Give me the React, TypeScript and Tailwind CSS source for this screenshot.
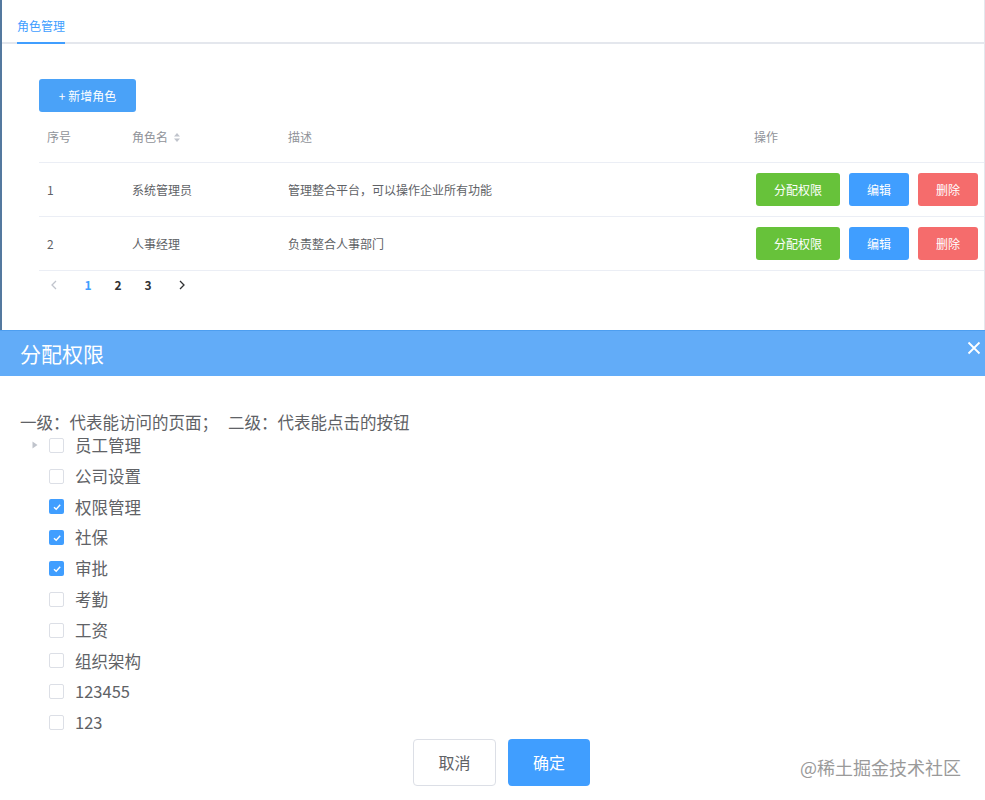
import React from "react";

const font = { fontFamily: '"Noto Sans CJK SC", "Noto Sans", sans-serif' };

function Check({ checked }: { checked: boolean }) {
  if (checked) {
    return (
      <span className="flex h-[15px] w-[15px] items-center justify-center rounded-[2px] bg-[#409eff]">
        <svg width="10" height="10" viewBox="0 0 10 10">
          <path d="M2 5.2 L4.2 7.3 L8.2 2.8" fill="none" stroke="#fff" strokeWidth="1.4" />
        </svg>
      </span>
    );
  }
  return <span className="h-[15px] w-[15px] rounded-[2px] border border-[#dcdfe6] bg-white" />;
}

const tree: { label: string; checked: boolean; caret?: boolean }[] = [
  { label: "员工管理", checked: false, caret: true },
  { label: "公司设置", checked: false },
  { label: "权限管理", checked: true },
  { label: "社保", checked: true },
  { label: "审批", checked: true },
  { label: "考勤", checked: false },
  { label: "工资", checked: false },
  { label: "组织架构", checked: false },
  { label: "123455", checked: false },
  { label: "123", checked: false },
];

const rows = [
  { id: "1", name: "系统管理员", desc: "管理整合平台，可以操作企业所有功能" },
  { id: "2", name: "人事经理", desc: "负责整合人事部门" },
];

export default function App() {
  return (
    <div className="relative h-[800px] w-[985px] overflow-hidden bg-white" style={font}>
      {/* upper page */}
      <div className="h-[330px] border-l-2 border-r border-l-[#54799f] border-r-[#e4e7ed] bg-white">
        <div className="flex h-[44px] items-end border-b-2 border-[#e4e7ed] pl-[15px]">
          <div className="relative -mb-[2px] flex h-[44px] w-[48px] items-center justify-center border-b-2 border-[#409eff] pt-[10px] text-[12px] text-[#409eff]">
            角色管理
          </div>
        </div>
        <div className="pl-[37px] pt-[35px]">
          <button className="flex h-[33px] w-[97px] items-center justify-center rounded-[3px] bg-[#4aa2f8] text-[12px] text-white">
            + 新增角色
          </button>
          <div className="text-[12px] text-[#606266]">
            <div className="grid h-[51px] grid-cols-[85px_156px_466px_1fr] items-center border-b border-[#ebeef5] text-[#909399]">
              <div className="pl-2">序号</div>
              <div className="flex items-center pl-2">
                角色名
                <svg className="ml-[5px]" width="8" height="11" viewBox="0 0 8 11">
                  <path d="M1 4.5 L4 1 L7 4.5 Z" fill="#c0c4cc" />
                  <path d="M1 6.5 L4 10 L7 6.5 Z" fill="#c0c4cc" />
                </svg>
              </div>
              <div className="pl-2">描述</div>
              <div className="pl-2">操作</div>
            </div>
            {rows.map((r) => (
              <div
                key={r.id}
                className="grid h-[54px] grid-cols-[85px_156px_466px_1fr] items-center border-b border-[#ebeef5]"
              >
                <div className="pl-2">{r.id}</div>
                <div className="pl-2">{r.name}</div>
                <div className="pl-2">{r.desc}</div>
                <div className="flex gap-[9px] pl-[10px]">
                  <button className="h-[33px] w-[84px] rounded-[3px] bg-[#67c23a] text-[12px] text-white">分配权限</button>
                  <button className="h-[33px] w-[60px] rounded-[3px] bg-[#409eff] text-[12px] text-white">编辑</button>
                  <button className="h-[33px] w-[60px] rounded-[3px] bg-[#f56c6c] text-[12px] text-white">删除</button>
                </div>
              </div>
            ))}
            <div className="flex h-[28px] items-center text-[12px] font-bold text-[#303133]">
              <span className="flex w-[30px] justify-center">
                <svg width="8" height="10" viewBox="0 0 8 10">
                  <path d="M6 1 L2 5 L6 9" fill="none" stroke="#c0c4cc" strokeWidth="1.3" />
                </svg>
              </span>
              <span className="ml-[4px] flex w-[30px] justify-center text-[#409eff]">1</span>
              <span className="flex w-[30px] justify-center">2</span>
              <span className="flex w-[30px] justify-center">3</span>
              <span className="ml-[4px] flex w-[30px] justify-center">
                <svg width="8" height="10" viewBox="0 0 8 10">
                  <path d="M2 1 L6 5 L2 9" fill="none" stroke="#303133" strokeWidth="1.3" />
                </svg>
              </span>
            </div>
          </div>
        </div>
      </div>

      {/* dialog header */}
      <div className="flex h-[46px] items-center justify-between border-t border-[#4d9ef0] bg-[#62acf8] pl-[20px] pr-[3px]">
        <span className="text-[21px] text-white">分配权限</span>
        <svg className="-mt-[12px]" width="16" height="16" viewBox="0 0 16 16">
          <path d="M2.5 2.5 L13.5 13.5 M13.5 2.5 L2.5 13.5" stroke="#fff" strokeWidth="1.8" />
        </svg>
      </div>

      {/* dialog body */}
      <div className="pl-[20px] pt-[35px] text-[16px] text-[#606266]">
        <div className="flex text-[16.5px] leading-[22px]">
          <span>一级：代表能访问的页面；</span>
          <span className="ml-[10px]">二级：代表能点击的按钮</span>
        </div>
        <div className="-mt-[3px]">
          {tree.map((t) => (
            <div key={t.label} className="flex h-[30.8px] items-center">
              <span className="flex w-[29px] justify-center">
                {t.caret ? (
                  <svg width="6" height="8" viewBox="0 0 6 8">
                    <path d="M0.5 0.5 L5.5 4 L0.5 7.5 Z" fill="#c0c4cc" />
                  </svg>
                ) : null}
              </span>
              <Check checked={t.checked} />
              <span className="ml-[11px] text-[16.5px]">{t.label}</span>
            </div>
          ))}
        </div>
        <div className="flex gap-[12px] pl-[393px] pt-[1px]">
          <button className="h-[47px] w-[83px] rounded-[4px] border border-[#dcdfe6] bg-white text-[16px] text-[#606266]">
            取消
          </button>
          <button className="h-[47px] w-[82px] rounded-[4px] bg-[#409eff] text-[16px] text-white">确定</button>
        </div>
      </div>

      <div className="absolute left-[800px] top-[754px] text-[18px] text-[#9a9a9a]">@稀土掘金技术社区</div>
    </div>
  );
}
